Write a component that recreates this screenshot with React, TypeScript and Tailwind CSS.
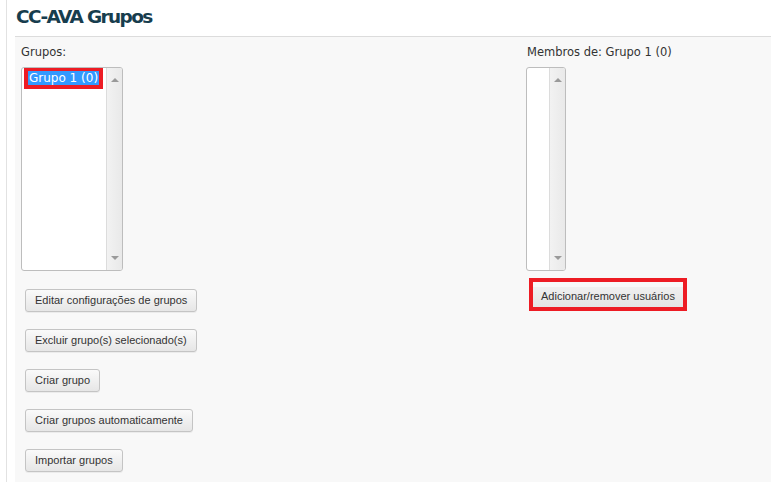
import React from "react";

const verdana = "font-['DejaVu_Sans',Verdana,sans-serif]";
const arial = "font-['Liberation_Sans',Arial,sans-serif]";

function Btn({ label }: { label: string }) {
  return (
    <button
      className={`${arial} h-[23px] rounded-[3px] border border-[#c4c4c4] bg-gradient-to-b from-[#fafafa] to-[#e6e6e6] px-[9px] text-[11px] leading-none text-[#333] shadow-[0_1px_0_rgba(0,0,0,0.05)]`}
    >
      {label}
    </button>
  );
}

function Arrow({ up }: { up?: boolean }) {
  return (
    <svg width="8" height="5" viewBox="0 0 8 5" className="block">
      {up ? (
        <path d="M0 5 L4 1 L8 5 Z" fill="#9a9a9a" />
      ) : (
        <path d="M0 0 L8 0 L4 4 Z" fill="#9a9a9a" />
      )}
    </svg>
  );
}

function ListBox({ width, children }: { width: string; children?: React.ReactNode }) {
  return (
    <div className={`relative flex h-[204px] ${width} overflow-hidden rounded-[3px] border border-[#bdbdbd] bg-white`}>
      <div className="flex-1">{children}</div>
      <div className="flex w-[16px] flex-col items-center justify-between border-l border-[#dcdcdc] bg-gradient-to-r from-[#f2f2f2] to-[#e9e9e9] py-[9px]">
        <Arrow up />
        <Arrow />
      </div>
    </div>
  );
}

export default function App() {
  return (
    <div className="flex h-[482px] w-[771px] overflow-hidden bg-white pl-[6px]">
      <div className="flex flex-1 flex-col border-l border-[#e2e2e2] pl-[8px]">
        <h2 className={`${verdana} h-[36px] pl-[1px] pt-[3px] text-[18.5px] font-bold tracking-[-1.6px] text-[#173d4e]`}>
          CC-AVA Grupos
        </h2>
        <div className="flex flex-1 border-t border-[#dcdcdc] bg-[#f8f8f8] pl-[6px] pt-[7px]">
          <div className="flex w-[505px] flex-col">
            <div className={`${verdana} mb-[8px] h-[15px] text-[11.5px] text-[#333]`}>Grupos:</div>
            <ListBox width="w-[102px]">
              <div className="absolute left-[2px] top-[-1px] border-[4px] border-[#ed1c24]">
                <div className={`${verdana} bg-[#3399ff] px-[1px] text-[12px] leading-[14px] text-white`}>
                  Grupo 1 (0)
                </div>
              </div>
            </ListBox>
            <div className="ml-[4px] mt-[18px] flex flex-col items-start gap-[17px]">
              <Btn label="Editar configurações de grupos" />
              <Btn label="Excluir grupo(s) selecionado(s)" />
              <Btn label="Criar grupo" />
              <Btn label="Criar grupos automaticamente" />
              <Btn label="Importar grupos" />
            </div>
          </div>
          <div className="flex flex-col">
            <div className={`${verdana} mb-[8px] h-[15px] pl-[1px] text-[11.5px] text-[#333]`}>Membros de: Grupo 1 (0)</div>
            <ListBox width="w-[40px]" />
            <div className="ml-[3px] mt-[7px] self-start border-[4px] border-[#ed1c24]">
              <button className={`${arial} h-[20px] bg-gradient-to-b from-[#f0f0f0] to-[#e4e4e4] px-[8px] text-[11px] leading-none text-[#333]`}>
                Adicionar/remover usuários
              </button>
            </div>
          </div>
        </div>
      </div>
    </div>
  );
}
